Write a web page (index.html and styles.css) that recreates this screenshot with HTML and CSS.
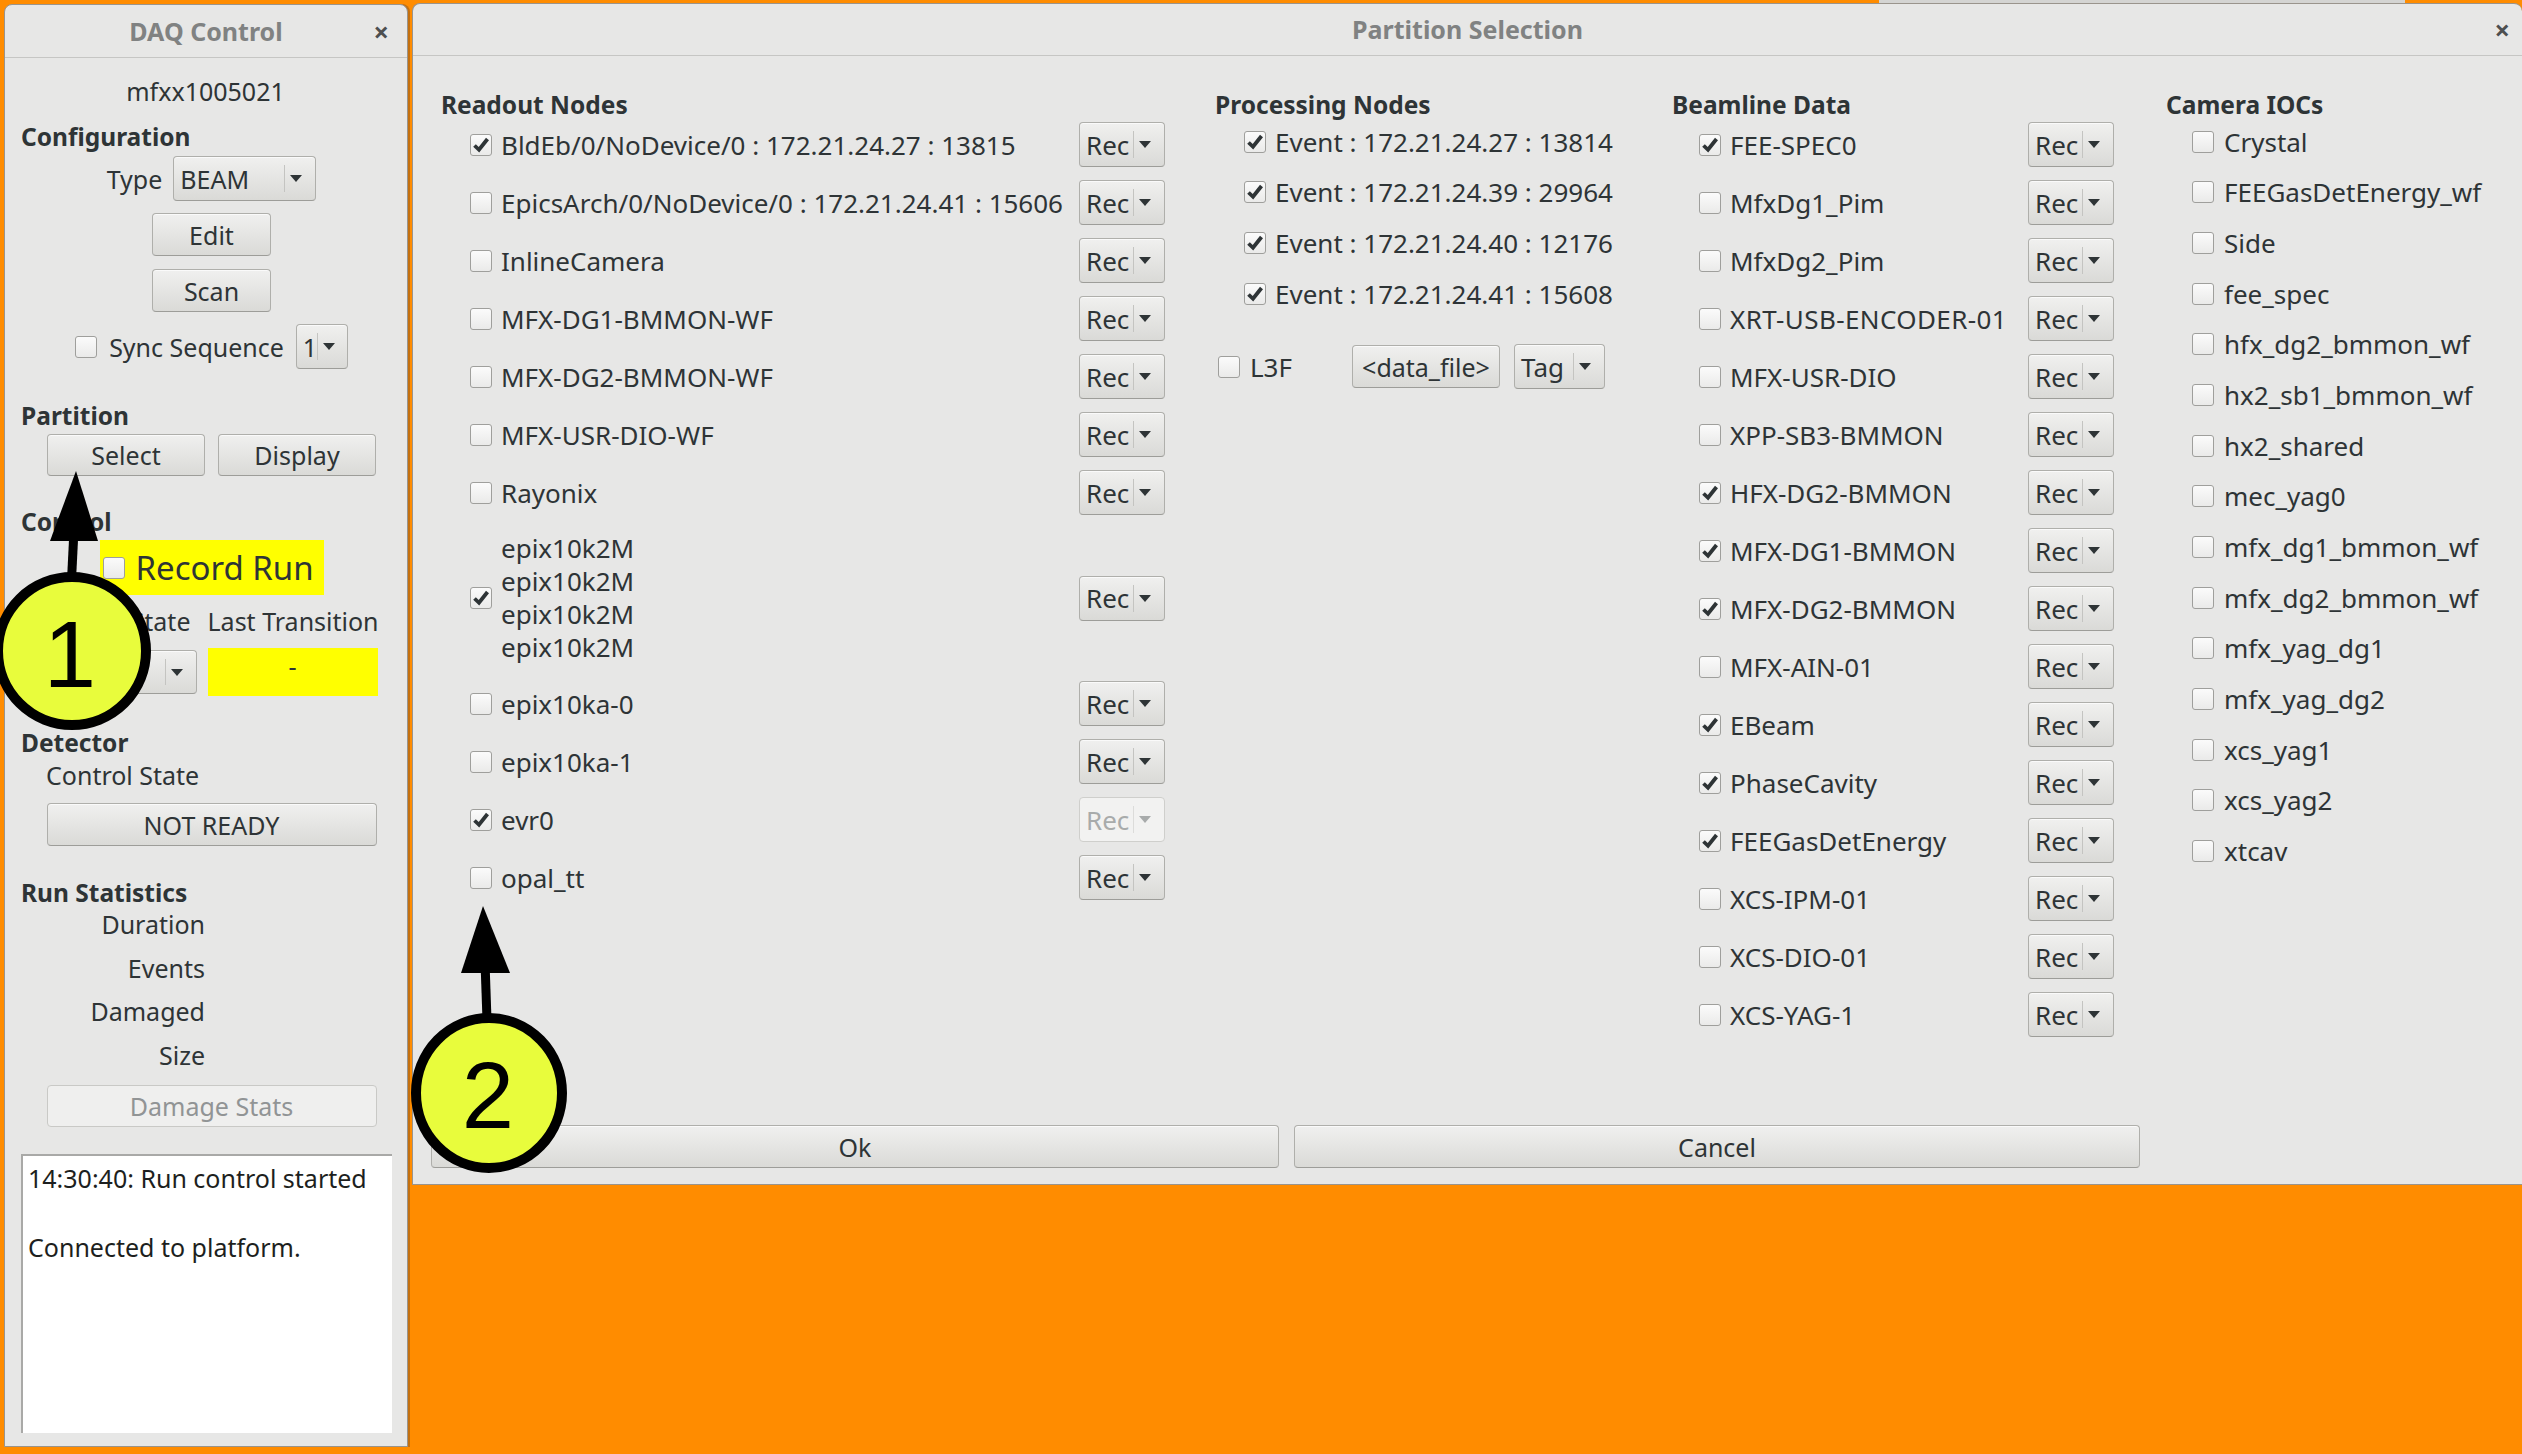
FILE: index.html
```html
<!DOCTYPE html>
<html>
<head>
<meta charset="utf-8">
<title>DAQ Control</title>
<link rel="stylesheet" href="styles.css">
</head>
<body>
<div class="backwin"></div>
<div class="desktop">
  <section class="win daq">
    <header class="titlebar"><span class="title">DAQ Control</span><span class="close">×</span></header>
    <div class="daq-body">
      <div class="host">mfxx1005021</div>
      <div class="heading h-config">Configuration</div>
      <div class="row-center type-row">
        <span>Type</span>
        <div class="combo combo-beam"><span class="combo-text">BEAM</span><span class="combo-arrow"><i class="tri"></i></span></div>
      </div>
      <div class="row-center edit-row"><button class="btn btn-small">Edit</button></div>
      <div class="row-center scan-row"><button class="btn btn-small">Scan</button></div>
      <div class="row-center sync-row">
        <span class="cb"></span>
        <span class="sync-label">Sync Sequence</span>
        <div class="combo combo-one"><span class="combo-text">1</span><span class="combo-arrow"><i class="tri"></i></span></div>
      </div>
      <div class="heading h-part">Partition</div>
      <div class="row-center select-row">
        <button class="btn btn-half">Select</button>
        <button class="btn btn-half">Display</button>
      </div>
      <div class="heading h-control">Control</div>
      <div class="row-center record-row">
        <div class="record"><span class="cb"></span><span class="record-label">Record Run</span></div>
      </div>
      <div class="row-center state-labels">
        <span class="cell-left">Control State</span>
        <span class="cell-right">Last Transition</span>
      </div>
      <div class="row-center state-values">
        <div class="combo combo-state"><span class="combo-text"></span><span class="combo-arrow"><i class="tri"></i></span></div>
        <div class="transition">-</div>
      </div>
      <div class="heading h-det">Detector</div>
      <div class="sub-label">Control State</div>
      <div class="row-center ready-row"><button class="btn btn-wide">NOT READY</button></div>
      <div class="heading h-stats">Run Statistics</div>
      <div class="stats">
        <div>Duration</div>
        <div>Events</div>
        <div>Damaged</div>
        <div>Size</div>
      </div>
      <div class="row-center dmg-row"><button class="btn btn-wide btn-disabled">Damage Stats</button></div>
      <div class="log">
        <div>14:30:40: Run control started</div>
        <div>&nbsp;</div>
        <div>Connected to platform.</div>
      </div>
    </div>
  </section>

  <section class="win dialog">
    <header class="titlebar"><span class="title">Partition Selection</span><span class="close">×</span></header>
    <div class="dlg-body">
      <div class="cols">
        <div class="col">
          <div class="col-head">Readout Nodes</div>
          <div class="list-rec readout">
            <div class="row-rec"><span class="cb on"><svg viewBox="0 0 22 22"><path d="M4.5 11.5l4.5 4.3L17.5 5"/></svg></span><span class="lbl">BldEb/0/NoDevice/0 : 172.21.24.27 : 13815</span><div class="combo rec"><span class="combo-text">Rec</span><span class="combo-arrow"><i class="tri"></i></span></div></div>
            <div class="row-rec"><span class="cb"></span><span class="lbl">EpicsArch/0/NoDevice/0 : 172.21.24.41 : 15606</span><div class="combo rec"><span class="combo-text">Rec</span><span class="combo-arrow"><i class="tri"></i></span></div></div>
            <div class="row-rec"><span class="cb"></span><span class="lbl">InlineCamera</span><div class="combo rec"><span class="combo-text">Rec</span><span class="combo-arrow"><i class="tri"></i></span></div></div>
            <div class="row-rec"><span class="cb"></span><span class="lbl">MFX-DG1-BMMON-WF</span><div class="combo rec"><span class="combo-text">Rec</span><span class="combo-arrow"><i class="tri"></i></span></div></div>
            <div class="row-rec"><span class="cb"></span><span class="lbl">MFX-DG2-BMMON-WF</span><div class="combo rec"><span class="combo-text">Rec</span><span class="combo-arrow"><i class="tri"></i></span></div></div>
            <div class="row-rec"><span class="cb"></span><span class="lbl">MFX-USR-DIO-WF</span><div class="combo rec"><span class="combo-text">Rec</span><span class="combo-arrow"><i class="tri"></i></span></div></div>
            <div class="row-rec"><span class="cb"></span><span class="lbl">Rayonix</span><div class="combo rec"><span class="combo-text">Rec</span><span class="combo-arrow"><i class="tri"></i></span></div></div>
            <div class="row-rec row-multi"><span class="cb on"><svg viewBox="0 0 22 22"><path d="M4.5 11.5l4.5 4.3L17.5 5"/></svg></span><span class="lbl lbl-multi">epix10k2M<br>epix10k2M<br>epix10k2M<br>epix10k2M</span><div class="combo rec"><span class="combo-text">Rec</span><span class="combo-arrow"><i class="tri"></i></span></div></div>
            <div class="row-rec"><span class="cb"></span><span class="lbl">epix10ka-0</span><div class="combo rec"><span class="combo-text">Rec</span><span class="combo-arrow"><i class="tri"></i></span></div></div>
            <div class="row-rec"><span class="cb"></span><span class="lbl">epix10ka-1</span><div class="combo rec"><span class="combo-text">Rec</span><span class="combo-arrow"><i class="tri"></i></span></div></div>
            <div class="row-rec"><span class="cb on"><svg viewBox="0 0 22 22"><path d="M4.5 11.5l4.5 4.3L17.5 5"/></svg></span><span class="lbl">evr0</span><div class="combo rec disabled"><span class="combo-text">Rec</span><span class="combo-arrow"><i class="tri"></i></span></div></div>
            <div class="row-rec"><span class="cb"></span><span class="lbl">opal_tt</span><div class="combo rec"><span class="combo-text">Rec</span><span class="combo-arrow"><i class="tri"></i></span></div></div>
          </div>
        </div>

        <div class="col">
          <div class="col-head">Processing Nodes</div>
          <div class="list-plain processing">
            <div class="row-plain"><span class="cb on"><svg viewBox="0 0 22 22"><path d="M4.5 11.5l4.5 4.3L17.5 5"/></svg></span><span class="lbl">Event : 172.21.24.27 : 13814</span></div>
            <div class="row-plain"><span class="cb on"><svg viewBox="0 0 22 22"><path d="M4.5 11.5l4.5 4.3L17.5 5"/></svg></span><span class="lbl">Event : 172.21.24.39 : 29964</span></div>
            <div class="row-plain"><span class="cb on"><svg viewBox="0 0 22 22"><path d="M4.5 11.5l4.5 4.3L17.5 5"/></svg></span><span class="lbl">Event : 172.21.24.40 : 12176</span></div>
            <div class="row-plain"><span class="cb on"><svg viewBox="0 0 22 22"><path d="M4.5 11.5l4.5 4.3L17.5 5"/></svg></span><span class="lbl">Event : 172.21.24.41 : 15608</span></div>
          </div>
          <div class="l3f">
            <span class="cb"></span><span class="l3f-label">L3F</span>
            <button class="btn btn-file">&lt;data_file&gt;</button>
            <div class="combo combo-tag"><span class="combo-text">Tag</span><span class="combo-arrow"><i class="tri"></i></span></div>
          </div>
        </div>

        <div class="col">
          <div class="col-head">Beamline Data</div>
          <div class="list-rec beamline">
            <div class="row-rec"><span class="cb on"><svg viewBox="0 0 22 22"><path d="M4.5 11.5l4.5 4.3L17.5 5"/></svg></span><span class="lbl">FEE-SPEC0</span><div class="combo rec"><span class="combo-text">Rec</span><span class="combo-arrow"><i class="tri"></i></span></div></div>
            <div class="row-rec"><span class="cb"></span><span class="lbl">MfxDg1_Pim</span><div class="combo rec"><span class="combo-text">Rec</span><span class="combo-arrow"><i class="tri"></i></span></div></div>
            <div class="row-rec"><span class="cb"></span><span class="lbl">MfxDg2_Pim</span><div class="combo rec"><span class="combo-text">Rec</span><span class="combo-arrow"><i class="tri"></i></span></div></div>
            <div class="row-rec"><span class="cb"></span><span class="lbl lbl-wide">XRT-USB-ENCODER-01</span><div class="combo rec"><span class="combo-text">Rec</span><span class="combo-arrow"><i class="tri"></i></span></div></div>
            <div class="row-rec"><span class="cb"></span><span class="lbl">MFX-USR-DIO</span><div class="combo rec"><span class="combo-text">Rec</span><span class="combo-arrow"><i class="tri"></i></span></div></div>
            <div class="row-rec"><span class="cb"></span><span class="lbl">XPP-SB3-BMMON</span><div class="combo rec"><span class="combo-text">Rec</span><span class="combo-arrow"><i class="tri"></i></span></div></div>
            <div class="row-rec"><span class="cb on"><svg viewBox="0 0 22 22"><path d="M4.5 11.5l4.5 4.3L17.5 5"/></svg></span><span class="lbl">HFX-DG2-BMMON</span><div class="combo rec"><span class="combo-text">Rec</span><span class="combo-arrow"><i class="tri"></i></span></div></div>
            <div class="row-rec"><span class="cb on"><svg viewBox="0 0 22 22"><path d="M4.5 11.5l4.5 4.3L17.5 5"/></svg></span><span class="lbl">MFX-DG1-BMMON</span><div class="combo rec"><span class="combo-text">Rec</span><span class="combo-arrow"><i class="tri"></i></span></div></div>
            <div class="row-rec"><span class="cb on"><svg viewBox="0 0 22 22"><path d="M4.5 11.5l4.5 4.3L17.5 5"/></svg></span><span class="lbl">MFX-DG2-BMMON</span><div class="combo rec"><span class="combo-text">Rec</span><span class="combo-arrow"><i class="tri"></i></span></div></div>
            <div class="row-rec"><span class="cb"></span><span class="lbl">MFX-AIN-01</span><div class="combo rec"><span class="combo-text">Rec</span><span class="combo-arrow"><i class="tri"></i></span></div></div>
            <div class="row-rec"><span class="cb on"><svg viewBox="0 0 22 22"><path d="M4.5 11.5l4.5 4.3L17.5 5"/></svg></span><span class="lbl">EBeam</span><div class="combo rec"><span class="combo-text">Rec</span><span class="combo-arrow"><i class="tri"></i></span></div></div>
            <div class="row-rec"><span class="cb on"><svg viewBox="0 0 22 22"><path d="M4.5 11.5l4.5 4.3L17.5 5"/></svg></span><span class="lbl">PhaseCavity</span><div class="combo rec"><span class="combo-text">Rec</span><span class="combo-arrow"><i class="tri"></i></span></div></div>
            <div class="row-rec"><span class="cb on"><svg viewBox="0 0 22 22"><path d="M4.5 11.5l4.5 4.3L17.5 5"/></svg></span><span class="lbl">FEEGasDetEnergy</span><div class="combo rec"><span class="combo-text">Rec</span><span class="combo-arrow"><i class="tri"></i></span></div></div>
            <div class="row-rec"><span class="cb"></span><span class="lbl">XCS-IPM-01</span><div class="combo rec"><span class="combo-text">Rec</span><span class="combo-arrow"><i class="tri"></i></span></div></div>
            <div class="row-rec"><span class="cb"></span><span class="lbl">XCS-DIO-01</span><div class="combo rec"><span class="combo-text">Rec</span><span class="combo-arrow"><i class="tri"></i></span></div></div>
            <div class="row-rec"><span class="cb"></span><span class="lbl">XCS-YAG-1</span><div class="combo rec"><span class="combo-text">Rec</span><span class="combo-arrow"><i class="tri"></i></span></div></div>
          </div>
        </div>

        <div class="col">
          <div class="col-head">Camera IOCs</div>
          <div class="list-plain camera">
            <div class="row-plain"><span class="cb"></span><span class="lbl">Crystal</span></div>
            <div class="row-plain"><span class="cb"></span><span class="lbl">FEEGasDetEnergy_wf</span></div>
            <div class="row-plain"><span class="cb"></span><span class="lbl">Side</span></div>
            <div class="row-plain"><span class="cb"></span><span class="lbl">fee_spec</span></div>
            <div class="row-plain"><span class="cb"></span><span class="lbl">hfx_dg2_bmmon_wf</span></div>
            <div class="row-plain"><span class="cb"></span><span class="lbl">hx2_sb1_bmmon_wf</span></div>
            <div class="row-plain"><span class="cb"></span><span class="lbl">hx2_shared</span></div>
            <div class="row-plain"><span class="cb"></span><span class="lbl">mec_yag0</span></div>
            <div class="row-plain"><span class="cb"></span><span class="lbl">mfx_dg1_bmmon_wf</span></div>
            <div class="row-plain"><span class="cb"></span><span class="lbl">mfx_dg2_bmmon_wf</span></div>
            <div class="row-plain"><span class="cb"></span><span class="lbl">mfx_yag_dg1</span></div>
            <div class="row-plain"><span class="cb"></span><span class="lbl">mfx_yag_dg2</span></div>
            <div class="row-plain"><span class="cb"></span><span class="lbl">xcs_yag1</span></div>
            <div class="row-plain"><span class="cb"></span><span class="lbl">xcs_yag2</span></div>
            <div class="row-plain"><span class="cb"></span><span class="lbl">xtcav</span></div>
          </div>
        </div>
      </div>
      <div class="actions">
        <button class="btn btn-ok">Ok</button>
        <button class="btn btn-cancel">Cancel</button>
      </div>
    </div>
  </section>
</div>

<svg class="annotations" width="2522" height="1454" viewBox="0 0 2522 1454">
  <line x1="71" y1="590" x2="74" y2="530" class="shaft"/>
  <polygon points="76,471 50,541 98,541" class="head"/>
  <ellipse cx="72" cy="651" rx="74" ry="74" class="bubble"/>
  <text x="70" y="687" class="num">1</text>
  <line x1="487" y1="1020" x2="485" y2="962" class="shaft"/>
  <polygon points="483,906 461,973 510,973" class="head"/>
  <ellipse cx="489" cy="1093" rx="73" ry="75" class="bubble"/>
  <text x="488" y="1128" class="num">2</text>
</svg>
</body>
</html>
```

FILE: styles.css
```css
* { box-sizing: border-box; }
html, body { margin: 0; padding: 0; }
body {
  width: 2522px;
  height: 1454px;
  background: #ff8c00;
  font-family: "Noto Sans", "Open Sans", sans-serif;
  font-size: 25px;
  color: #2e3436;
  overflow: hidden;
  position: relative;
}
.backwin {
  position: absolute;
  left: 1879px;
  top: 0;
  width: 526px;
  height: 3px;
  background: #d4d4d2;
}
.desktop {
  display: flex;
  align-items: flex-start;
  padding-left: 4px;
  gap: 4px;
  height: 100%;
  position: relative;
}
.win {
  background: #e7e7e6;
  border: 1px solid #9a948c;
  border-radius: 8px 8px 0 0;
  display: flex;
  flex-direction: column;
  flex: none;
}
.daq { width: 404px; height: 1443px; margin-top: 4px; box-shadow: 2px 0 0 #c4700f; }
.dialog { width: 2110px; height: 1182px; margin-top: 3px; border-right: none; }

.titlebar {
  flex: none;
  height: 53px;
  border-bottom: 1px solid #c6c6c4;
  display: grid;
  grid-template-columns: 1fr auto 1fr;
  align-items: center;
  border-radius: 8px 8px 0 0;
}
.dialog .titlebar { height: 52px; }
.title { grid-column: 2; font-weight: 700; font-size: 25px; color: #808282; line-height: 1; }
.close { grid-column: 3; justify-self: end; font-weight: 700; font-size: 27px; color: #4d4f50; line-height: 1; }
.daq .close { margin-right: 18px; }
.dialog .close { margin-right: 12px; }

/* DAQ window body */
.daq-body { display: flex; flex-direction: column; padding: 0 5px 0 16px; }
.host { margin-top: 16px; height: 34px; line-height: 34px; text-align: center; padding-right: 12px; }
.heading { font-weight: 700; font-size: 24.5px; line-height: 32px; height: 30px; white-space: nowrap; }
.h-config { margin-top: 13px; }
.h-part { margin-top: 31px; }
.h-control { margin-top: 30px; }
.h-det { margin-top: 31px; }
.h-stats { margin-top: 31px; }
.row-center { display: flex; justify-content: center; align-items: center; }
.type-row { margin-top: 5px; height: 45px; gap: 11px; }
.edit-row { margin-top: 12px; }
.scan-row { margin-top: 13px; }
.sync-row { margin-top: 12px; height: 45px; gap: 12px; }
.select-row { margin-top: 4px; gap: 13px; }
.record-row { margin-top: 4px; }
.state-labels { margin-top: 11px; height: 30px; gap: 11px; line-height: 30px; }
.state-values { margin-top: 12px; height: 48px; gap: 11px; }
.cell-left { width: 151px; display: flex; justify-content: flex-end; padding-right: 6px; white-space: nowrap; }
.cell-right { width: 170px; text-align: center; white-space: nowrap; }
.sub-label { margin-top: 3px; height: 30px; line-height: 30px; padding-left: 25px; }
.ready-row { margin-top: 13px; }
.stats { margin-top: -4px; width: 184px; text-align: right; line-height: 43.5px; }
.dmg-row { margin-top: 8px; }
.log {
  margin-top: 27px;
  width: 371px;
  height: 279px;
  background: #ffffff;
  border-top: 2px solid #a9a9a7;
  border-left: 2px solid #a9a9a7;
  padding: 5px 0 0 5px;
  line-height: 34.5px;
  color: #1d1f20;
}

/* Buttons */
.btn {
  font: inherit;
  color: #2e3436;
  height: 43px;
  padding: 0;
  border: 1px solid #afafab;
  border-bottom-color: #9d9d99;
  border-radius: 4px;
  background: linear-gradient(#f0f0ef, #dadad7);
  box-shadow: inset 0 1px 0 #fafafa;
  display: flex;
  align-items: center;
  justify-content: center;
  flex: none;
}
.btn-small { width: 119px; }
.btn-half { width: 158px; height: 42px; }
.btn-wide { width: 330px; }
.dmg-row .btn-wide { height: 42px; }
.btn-disabled { background: #efefee; border-color: #c9c9c6; color: #919495; box-shadow: none; }
.btn-file { width: 148px; }
.btn-ok { width: 848px; }
.btn-cancel { width: 846px; }

/* Combos */
.combo {
  display: flex;
  align-items: stretch;
  height: 45px;
  border: 1px solid #afafab;
  border-bottom-color: #9d9d99;
  border-radius: 4px;
  background: linear-gradient(#f0f0ef, #dadad7);
  box-shadow: inset 0 1px 0 #fafafa;
  flex: none;
}
.combo-text { flex: 1; display: flex; align-items: center; padding-left: 6px; white-space: nowrap; }
.combo-arrow {
  flex: none;
  width: 31px;
  margin: 8px 0;
  padding-right: 8px;
  border-left: 1px solid #c4c4c1;
  display: flex;
  align-items: center;
  justify-content: center;
}
.tri {
  display: block;
  width: 0;
  height: 0;
  border-left: 6px solid transparent;
  border-right: 6px solid transparent;
  border-top: 7px solid #2e3436;
}
.combo-beam { width: 143px; }
.combo-one { width: 52px; }
.combo-state { width: 151px; height: 44px; }
.combo-tag { width: 91px; margin-left: 14px; }
.rec { width: 86px; margin-left: auto; }
.combo.disabled { background: #f2f2f1; border-color: #cfcfcc; color: #a8abab; box-shadow: none; }
.combo.disabled .tri { border-top-color: #a8abab; }
.combo.disabled .combo-arrow { border-left-color: #dcdcda; }

/* Checkboxes */
.cb {
  flex: none;
  width: 22px;
  height: 22px;
  border: 1px solid #9f9f9c;
  border-radius: 3px;
  background: linear-gradient(#fbfbfb, #eaeae9);
  display: flex;
  align-items: center;
  justify-content: center;
}
.cb svg { width: 22px; height: 22px; display: block; overflow: visible; }
.cb svg path { fill: none; stroke: #2e3436; stroke-width: 3.8; stroke-linecap: butt; stroke-linejoin: miter; }

/* Record run */
.record {
  width: 224px;
  height: 55px;
  background: #ffff00;
  display: flex;
  align-items: center;
  padding-left: 3px;
  gap: 11px;
}
.record-label { font-size: 33px; line-height: 1; white-space: nowrap; }
.transition {
  width: 170px;
  height: 48px;
  background: #ffff00;
  text-align: center;
  line-height: 36px;
}
.sync-label { white-space: nowrap; }

/* Dialog */
.dialog { font-size: 26px; }
.dlg-body { flex: 1; display: flex; flex-direction: column; padding: 34px 0 16px 0; }
.cols {
  flex: 1;
  display: grid;
  grid-template-columns: 774px 457px 494px 1fr;
  align-items: start;
  padding-left: 28px;
}
.col-head { font-weight: 700; font-size: 24.5px; line-height: 30px; height: 30px; white-space: nowrap; }
.list-rec { display: flex; flex-direction: column; gap: 13px; margin-top: 2px; }
.row-rec { display: flex; align-items: center; min-height: 45px; }
.readout { width: 724px; }
.beamline { width: 442px; }
.lbl { white-space: nowrap; line-height: 30px; }
.lbl-wide { letter-spacing: 0.4px; }
.readout .cb { margin-left: 29px; }
.readout .lbl { margin-left: 9px; }
.beamline .cb { margin-left: 27px; }
.beamline .lbl { margin-left: 9px; }
.row-multi { min-height: 140px; padding: 4px 0; }
.lbl-multi { line-height: 33px; }
.list-plain { display: flex; flex-direction: column; gap: 12.7px; margin-top: 2.5px; }
.row-plain { display: flex; align-items: center; height: 38px; }
.processing .cb { margin-left: 29px; }
.processing .lbl { margin-left: 9px; }
.camera .cb { margin-left: 26px; }
.camera .lbl { margin-left: 10px; }
.l3f { display: flex; align-items: center; height: 45px; margin-top: 31.5px; }
.l3f .cb { margin-left: 3px; }
.l3f-label { width: 102px; margin-left: 10px; }
.actions { display: flex; gap: 15px; padding-left: 18px; }
.dialog .btn { font-size: 25px; }

/* Annotations */
.annotations { position: absolute; left: 0; top: 0; pointer-events: none; }
.shaft { stroke: #000; stroke-width: 9; }
.head { fill: #000; }
.bubble { fill: #e8fc3c; stroke: #000; stroke-width: 10; }
.num { font-family: "Liberation Sans", Arial, sans-serif; font-size: 94px; text-anchor: middle; fill: #000; }
```
